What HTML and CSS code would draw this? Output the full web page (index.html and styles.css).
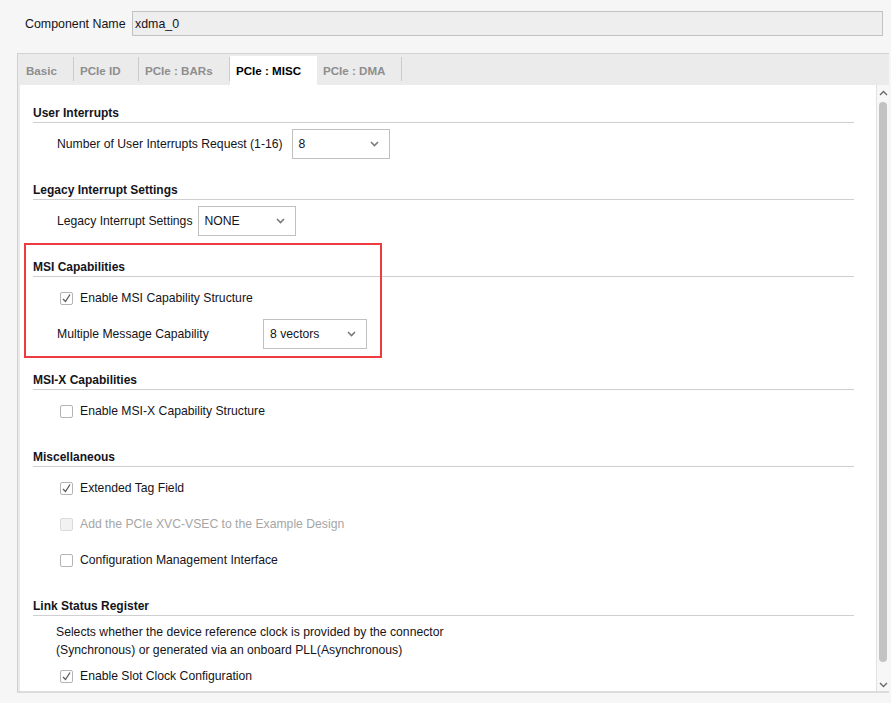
FILE: index.html
```html
<!DOCTYPE html>
<html>
<head>
<meta charset="utf-8">
<link rel="stylesheet" href="styles.css">
</head>
<body>
<div class="top">
  <span class="top-label">Component Name</span>
  <div class="name-input">xdma_0</div>
</div>
<div class="panel">
  <div class="tabs">
    <div class="tab t-basic">Basic</div>
    <div class="tab t-id">PCIe ID</div>
    <div class="tab t-bars">PCIe : BARs</div>
    <div class="tab t-misc active">PCIe : MISC</div>
    <div class="tab t-dma">PCIe : DMA</div>
  </div>
  <div class="pane">
    <div class="content">
      <section class="section">
        <div class="sec-title">User Interrupts</div>
        <div class="sec-body">
          <div class="row gap-wide">
            <span class="lbl">Number of User Interrupts Request (1-16)</span>
            <div class="select s97"><span>8</span><svg class="chev" width="9" height="6" viewBox="0 0 9 6"><path d="M1 1 L4.5 4.5 L8 1" fill="none" stroke="#7a7a7a" stroke-width="1.6"/></svg></div>
          </div>
        </div>
      </section>
      <section class="section">
        <div class="sec-title">Legacy Interrupt Settings</div>
        <div class="sec-body">
          <div class="row gap-narrow">
            <span class="lbl">Legacy Interrupt Settings</span>
            <div class="select s97"><span>NONE</span><svg class="chev" width="9" height="6" viewBox="0 0 9 6"><path d="M1 1 L4.5 4.5 L8 1" fill="none" stroke="#7a7a7a" stroke-width="1.6"/></svg></div>
          </div>
        </div>
      </section>
      <section class="section">
        <div class="sec-title">MSI Capabilities</div>
        <div class="sec-body">
          <div class="row cb-row">
            <span class="cb"><svg width="11" height="11" viewBox="0 0 11 11"><path d="M2 6 L4.5 8.5 L9 1.5" fill="none" stroke="#5a5a5a" stroke-width="1.3"/></svg></span>
            <span>Enable MSI Capability Structure</span>
          </div>
          <div class="row">
            <span class="lbl wide">Multiple Message Capability</span>
            <div class="select s103"><span>8 vectors</span><svg class="chev" width="9" height="6" viewBox="0 0 9 6"><path d="M1 1 L4.5 4.5 L8 1" fill="none" stroke="#7a7a7a" stroke-width="1.6"/></svg></div>
          </div>
        </div>
      </section>
      <section class="section">
        <div class="sec-title">MSI-X Capabilities</div>
        <div class="sec-body">
          <div class="row cb-row">
            <span class="cb"></span>
            <span>Enable MSI-X Capability Structure</span>
          </div>
        </div>
      </section>
      <section class="section">
        <div class="sec-title">Miscellaneous</div>
        <div class="sec-body">
          <div class="row cb-row">
            <span class="cb"><svg width="11" height="11" viewBox="0 0 11 11"><path d="M2 6 L4.5 8.5 L9 1.5" fill="none" stroke="#5a5a5a" stroke-width="1.3"/></svg></span>
            <span>Extended Tag Field</span>
          </div>
          <div class="row cb-row disabled">
            <span class="cb"></span>
            <span>Add the PCIe XVC-VSEC to the Example Design</span>
          </div>
          <div class="row cb-row">
            <span class="cb"></span>
            <span>Configuration Management Interface</span>
          </div>
        </div>
      </section>
      <section class="section">
        <div class="sec-title">Link Status Register</div>
        <div class="sec-body link">
          <p class="desc">Selects whether the device reference clock is provided by the connector<br>(Synchronous) or generated via an onboard PLL(Asynchronous)</p>
          <div class="row cb-row">
            <span class="cb"><svg width="11" height="11" viewBox="0 0 11 11"><path d="M2 6 L4.5 8.5 L9 1.5" fill="none" stroke="#5a5a5a" stroke-width="1.3"/></svg></span>
            <span>Enable Slot Clock Configuration</span>
          </div>
        </div>
      </section>
      <div class="highlight"></div>
    </div>
    <div class="scrollbar">
      <svg class="arrow" width="9" height="6" viewBox="0 0 9 6"><path d="M1 5 L4.5 1.5 L8 5" fill="none" stroke="#6a6a6a" stroke-width="1.4"/></svg>
      <div class="thumb"></div>
      <svg class="arrow" width="9" height="6" viewBox="0 0 9 6"><path d="M1 1 L4.5 4.5 L8 1" fill="none" stroke="#6a6a6a" stroke-width="1.4"/></svg>
    </div>
  </div>
</div>
</body>
</html>
```

FILE: styles.css
```css
* { box-sizing: border-box; }
html, body { margin: 0; padding: 0; }
body {
  width: 891px;
  height: 703px;
  overflow: hidden;
  background: #f6f6f6;
  font-family: "Liberation Sans", Arial, sans-serif;
  font-size: 12.2px;
  color: #141420;
}
.top {
  display: flex;
  align-items: center;
  padding: 11px 8px 0 25px;
  height: 36px;
  font-size: 12.4px;
}
.top-label { width: 107px; }
.name-input {
  width: 751px;
  height: 25px;
  background: #eeeeee;
  border: 1px solid #c2c2c2;
  padding-left: 2px;
  display: flex;
  align-items: center;
}
.panel {
  margin: 17px 2px 0 17px;
  height: 640px;
  border-top: 1px solid #d2d2d2;
  border-left: 1px solid #d0d0d0;
  border-bottom: 2px solid #dcdcdc;
  background: #ebebeb;
  padding-left: 2px;
  display: flex;
  flex-direction: column;
}
.tabs {
  height: 31px;
  margin-left: -2px;
  display: flex;
  align-items: flex-end;
  background: #ebebeb;
}
.tab {
  height: 29px;
  padding-left: 8px;
  font-weight: bold;
  font-size: 11.6px;
  color: #8e8e8e;
  display: flex;
  align-items: center;
  position: relative;
}
.tab::after {
  content: "";
  position: absolute;
  right: 0;
  top: 1px;
  height: 24px;
  width: 1px;
  background: #cbcbcb;
}
.tab.active { background: #ffffff; color: #000000; padding-left: 6px; }
.tab.active::after { display: none; }
.t-basic { width: 56px; }
.t-id { width: 65px; padding-left: 6px; }
.t-bars { width: 91px; padding-left: 6px; }
.t-misc { width: 87px; }
.t-dma { width: 85px; padding-left: 6px; }
.pane {
  flex: 1;
  display: flex;
  min-height: 0;
}
.content {
  flex: 1;
  position: relative;
  background: #ffffff;
  padding: 20px 22px 0 13px;
  overflow: hidden;
}
.section + .section { margin-top: 23px; }
.sec-title {
  font-weight: bold;
  font-size: 12px;
  line-height: 17px;
  height: 18px;
  border-bottom: 1px solid #cfcfcf;
}
.sec-body {
  padding-top: 6px;
  display: flex;
  flex-direction: column;
  gap: 6px;
}
.sec-body.link { padding-top: 7px; gap: 2px; }
.row {
  height: 30px;
  display: flex;
  align-items: center;
  padding-left: 24px;
  gap: 6px;
}
.row.gap-wide { gap: 9px; }
.row.gap-narrow { gap: 5px; }
.lbl.wide { width: 200px; }
.select {
  height: 30px;
  border: 1px solid #c0c0c0;
  background: #fff;
  display: flex;
  align-items: center;
  justify-content: space-between;
  padding: 0 10px 0 6px;
}
.s97 { width: 98px; }
.s103 { width: 104px; }
.chev { display: block; }
.cb-row { padding-left: 27px; gap: 7px; }
.cb {
  width: 13px;
  height: 13px;
  border: 1px solid #b4b4b4;
  border-radius: 2px;
  background: #fff;
  display: flex;
  align-items: center;
  justify-content: center;
}
.cb svg { display: block; }
.disabled { color: #a6a6a6; }
.disabled .cb { background: #f2f2f2; border-color: #dadada; }
.desc {
  margin: 0;
  padding-left: 23px;
  line-height: 18px;
}
.highlight {
  position: absolute;
  left: 4px;
  top: 158px;
  width: 358px;
  height: 115px;
  border: 2px solid #ef3a3f;
}
.scrollbar {
  width: 13px;
  background: #f7f7f7;
  border-left: 1px solid #e2e2e2;
  display: flex;
  flex-direction: column;
  align-items: center;
  padding: 5px 0 3px;
}
.arrow { display: block; flex: none; }
.thumb {
  width: 8px;
  flex: 1;
  margin: 6px 0 20px;
  background: #c3c3c3;
  border-radius: 4px;
}
```
